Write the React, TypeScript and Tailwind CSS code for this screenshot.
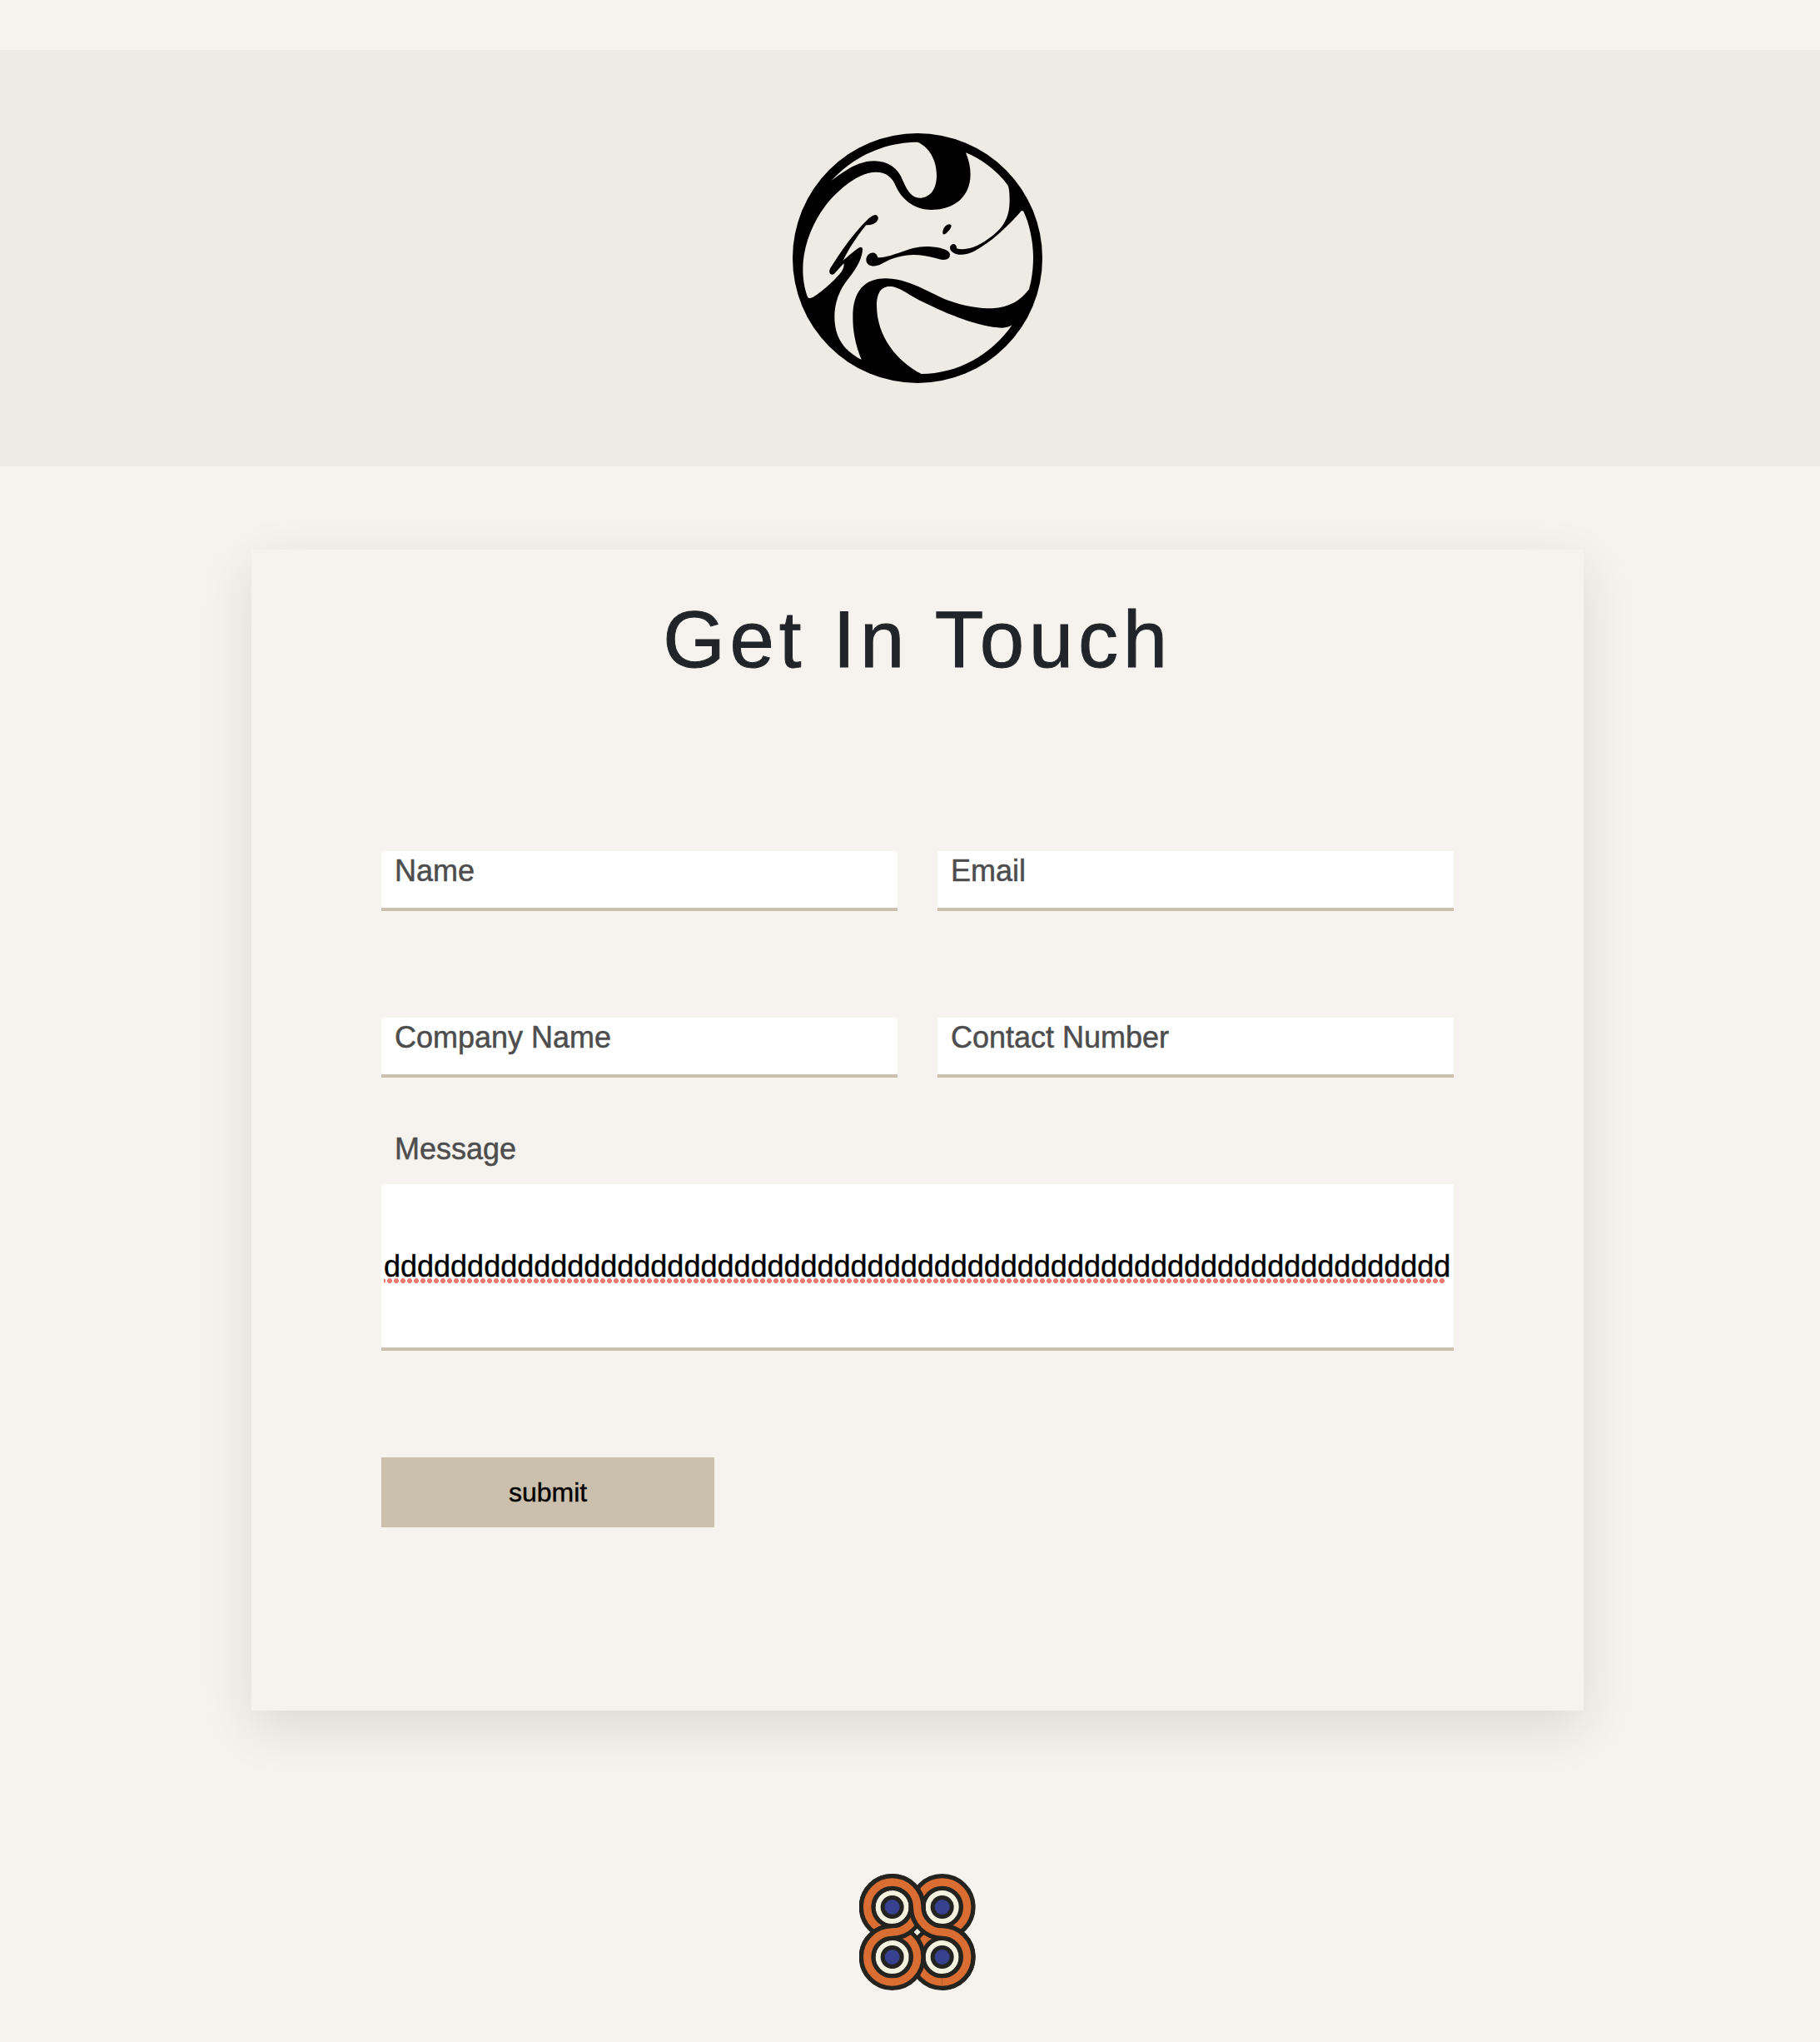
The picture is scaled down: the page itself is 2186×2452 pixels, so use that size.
import React from "react";

function BrandLogo() {
  return (
    <svg viewBox="66 30 900 900" className="size-[300px]" aria-label="Brand">
      <circle cx="516" cy="480" r="450" fill="#000" />
      <g fill="#eeebe4">
        <path d="M205 201C290 110 400 62 517 62C560 82 585 128 585 182C585 235 558 263 524 263C490 262 476 228 462 198C445 155 410 130 360 130C300 130 250 168 205 201Z" />
        <path d="M690 100C711 150 712 198 695 235C672 285 620 306 567 306C510 306 463 273 440 225C425 185 400 170 367 170C305 170 245 225 210 260C145 330 103 430 103 520C103 565 112 600 121 622Q126 627 140 620C175 600 236 543 246 522Q253 508 250 499L216 536Q209 542 202 537Q195 530 202 516C240 455 290 385 333 344Q352 324 365 324Q376 327 374 340C368 356 352 361 331 361C305 392 268 446 248 488C270 470 292 450 308 441Q320 438 318 452C314 492 285 531 262 560C235 595 217 640 217 690C217 765 250 813 314 846C290 785 283 740 283 690C283 600 325 553 400 553C480 553 550 600 620 630C690 655 740 661 785 661C850 658 890 630 918 592C930 550 933 510 933 475C933 420 918 350 897 310L890 310C860 345 800 405 760 430C720 458 695 470 665 467C640 463 630 450 634 437Q640 426 650 430Q658 434 657 445C680 453 725 445 770 411C830 370 848 330 848 270C848 245 846 230 842 218C800 160 740 120 690 100Z" />
        <path d="M530 897C440 850 369 760 369 650C369 600 390 582 415 582C450 582 470 605 540 640C620 680 740 730 820 731Q845 730 857 721C780 830 660 897 530 897Z" />
      </g>
      <path d="M373 478C430 478 480 438 550 438C590 438 633 450 633 466C633 480 625 486 610 486C590 486 560 468 500 468C440 470 410 488 384 502C362 514 331 510 331 485C333 458 368 450 373 478Z" />
      <path d="M608 393C604 382 612 366 622 360Q634 354 638 362C638 372 628 382 619 391Q612 396 608 393Z" />
    </svg>
  );
}

const centers = [
  [155, 150],
  [335, 150],
  [155, 330],
  [335, 330],
];

function Band({ d }: { d: string }) {
  return (
    <g fill="none">
      <path d={d} stroke="#232320" strokeWidth="60" />
      <path d={d} stroke="#d96d32" strokeWidth="28" />
    </g>
  );
}

function ring(x: number, y: number) {
  return `M${x - 90} ${y}a90 90 0 1 1 180 0a90 90 0 1 1 -180 0Z`;
}

function KnotLogo() {
  return (
    <svg viewBox="36 30 420 420" className="size-[140px]" aria-label="Knot">
      {centers.map(([x, y]) => (
        <g key={`${x}-${y}`}>
          <circle cx={x} cy={y} r="62" fill="#f4f1df" />
          <circle cx={x} cy={y} r="34.5" fill="#37418f" stroke="#232320" strokeWidth="15" />
        </g>
      ))}
      <Band d={ring(335, 150)} />
      <Band d={ring(335, 330)} />
      <Band d={ring(155, 150)} />
      <Band d={ring(155, 330)} />
      <Band d="M65 330A90 90 0 0 1 155 240A90 90 0 0 0 245 150" />
      <Band d="M65 150A90 90 0 0 1 245 150A90 90 0 0 0 335 240A90 90 0 0 1 335 420" />
      <path d="M245 228L257 240L245 252L233 240Z" fill="#f4f1df" />
    </svg>
  );
}

function Field({ label }: { label: string }) {
  return (
    <label className="block h-[72px] border-b-4 border-[#cbbfad] bg-white pl-4 text-[36px] leading-[47px] text-[#4d4d4d] [-webkit-text-stroke:0.5px_#4d4d4d]">
      {label}
    </label>
  );
}

export default function App() {
  return (
    <div className="h-[2452px] w-full overflow-hidden bg-[#f6f3ee] font-['Liberation_Sans',Arial,sans-serif]">
      <div className="flex w-[2204px] flex-col items-center pt-[60px]">
        <header className="flex h-[500px] w-full items-center justify-center bg-[#eeebe4]">
          <BrandLogo />
        </header>
        <main className="mt-[100px] h-[1394px] w-[1600px] bg-[#f6f3ee] px-[156px] shadow-[0_20px_60px_rgba(0,0,0,0.107)]">
          <h1 className="pt-[50px] text-center text-[96px] leading-[115px] tracking-[5.76px] text-[#212529] [-webkit-text-stroke:1px_#212529]">
            Get In Touch
          </h1>
          <form className="mt-[197px]">
            <div className="grid grid-cols-2 gap-x-12 gap-y-32">
              <Field label="Name" />
              <Field label="Email" />
              <Field label="Company Name" />
              <Field label="Contact Number" />
            </div>
            <div className="mt-[62px] pl-4 text-[36px] leading-[48px] text-[#4d4d4d] [-webkit-text-stroke:0.5px_#4d4d4d]">
              Message
            </div>
            <div className="mt-[18px] h-[200px] border-b-4 border-[#cbbfad] bg-white pt-[75px] pl-[3px]">
              <div className="h-[38px] text-[36px] leading-[48px] text-black [-webkit-text-stroke:0.4px_#000]">
                {"d".repeat(64)}
              </div>
              <div className="h-[6px] w-[1275px] bg-[radial-gradient(circle,#ef7b6f_2.7px,transparent_3.3px)] bg-size-[8px_6px] bg-position-[3px_0px]" />
            </div>
            <button
              type="button"
              className="mt-[128px] block h-[84px] w-[400px] bg-[#cbbfad] text-[32px] leading-[48px] text-black [-webkit-text-stroke:0.4px_#000]"
            >
              submit
            </button>
          </form>
        </main>
        <footer className="mt-[196px]">
          <KnotLogo />
        </footer>
      </div>
    </div>
  );
}
